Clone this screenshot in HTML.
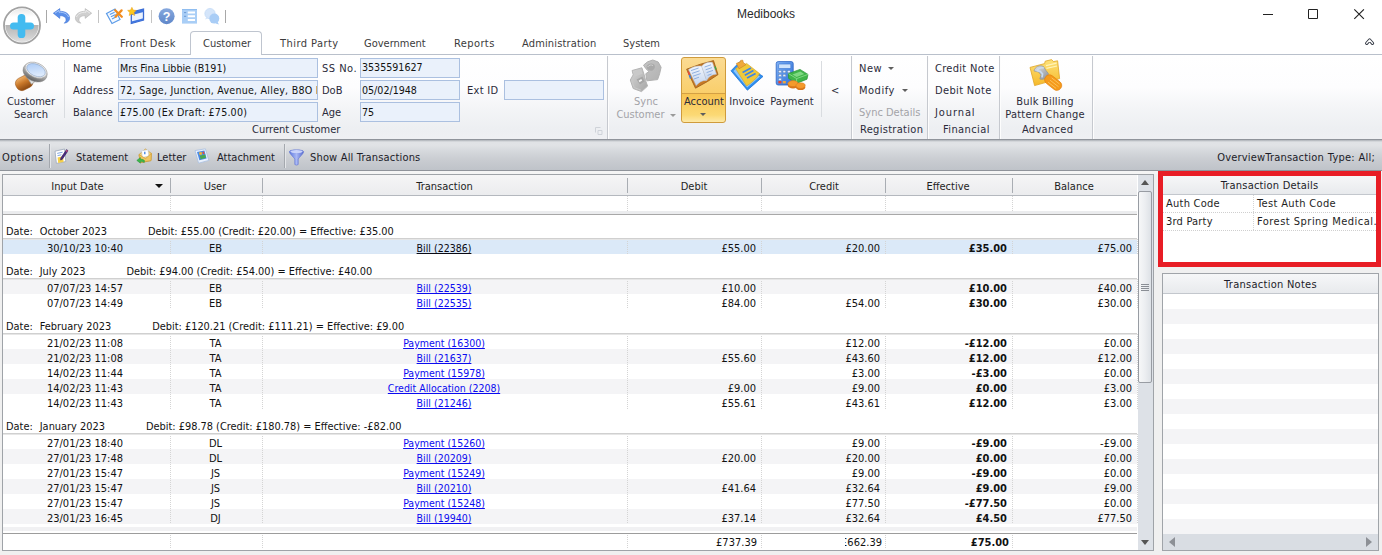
<!DOCTYPE html>
<html lang="en"><head><meta charset="utf-8"><title>Medibooks</title>
<style>
*{box-sizing:border-box}
html,body{margin:0;padding:0}
body{width:1382px;height:555px;overflow:hidden;background:#f0f0f0;font-family:"DejaVu Sans Condensed","Liberation Sans",sans-serif;font-size:11px;color:#1e1e1e;position:relative}
i{display:block;position:absolute;font-style:normal}
svg{position:absolute;display:block;overflow:visible}
.t{position:absolute;white-space:nowrap;line-height:13px}
.t.c{text-align:center}
.g{color:#9b9b9b}
/* title */
#titlebar{position:absolute;left:0;top:0;width:1382px;height:55px;background:#fff;border-bottom:1px solid #b9c0cb}
#titlebar .title{font-family:'Liberation Sans',sans-serif;font-size:12px;color:#2a2a2a}
.tab{color:#3b3b3b}
#tabsel{position:absolute;left:190px;top:31px;width:72px;height:24px;border:1px solid #bfc5cf;border-bottom:none;border-radius:4px 4px 0 0;background:#fff}
/* ribbon */
#ribbon{position:absolute;left:0;top:55px;width:1382px;height:85px;background:linear-gradient(#ffffff 0,#fdfdfe 38%,#f4f5f7 62%,#edeff2 88%,#eff0f3 100%);border-bottom:1px solid #90949b}
#ribbon .t{color:#2b2b3a}
#ribbon .t.g{color:#a3a3a8}
.gsep{left:0;top:1px;width:2px;height:83px;background:linear-gradient(90deg,#c6c9cf 0,#c6c9cf 50%,#fdfdfd 50%)}
.inp{position:absolute;height:20px;background:#eaf1fb;border:1px solid #abc0e0;font-size:10.6px;line-height:18px;padding-left:1px;white-space:nowrap;overflow:hidden;color:#111}
/* toolbar */
#toolbar{position:absolute;left:0;top:140px;width:1382px;height:31px;background:linear-gradient(#a9adb3 0,#cfd2d6 1.2px,#e0e2e5 2.5px,#e1e3e6 5px,#d4d7db 12px,#c9ccd1 20px,#bfc3c9 30px,#8f939a 30px,#8f939a 31px)}
#toolbar .t{color:#1c1c28}
/* grid */
#grid{position:absolute;left:2px;top:174px;width:1152px;height:377px;border:1px solid #9fa3a8;background:#fff;font-size:11px;overflow:hidden}
.ghead{position:absolute;left:0;top:0;width:1134px;height:21px;background:linear-gradient(#f5f5f6,#ebecee);border-bottom:1px solid #b4b8be}
.hsep{top:3px;width:1px;height:15px;background:#a9adb3}
.sortarrow{left:152px;top:9px;width:0;height:0;border:4px solid transparent;border-top:4px solid #111;border-bottom:none}
.gfilter{position:absolute;left:0;top:21px;width:1134px;height:15px;background:#fff}
.gfilterbar{position:absolute;left:0;top:36px;width:1134px;height:4px;background:#ebecee;border-bottom:1px solid #a8a8a8}
.vdot{width:1px;background:repeating-linear-gradient(#d4d4d4 0,#d4d4d4 1px,transparent 1px,transparent 2px)}
.grp{position:absolute;left:0;width:1134px;height:26px;z-index:2;border-bottom:1px solid #e6e6e6;box-shadow:inset 0 -1px 0 #d0d0d0;line-height:13px;padding-top:11px;white-space:nowrap;color:#111;font-size:10.9px}
.grp .g1{margin-left:3px}
.grp .g2{margin-left:7px}
.grp .g3{margin-left:41px}
.row{position:absolute;left:0;width:1134px;height:15px}
.row.sel{height:15px}
.row.alt{background:#f4f4f6}
.row.sel{background:#dbe9f8}
.cell{position:absolute;top:0;height:15px;line-height:19px;white-space:nowrap;color:#111}
.cell.c{text-align:center}
.cell.r{text-align:right;padding-right:4px}
.cell.b{font-weight:bold}
.row a{color:#0b0bf0;text-decoration:underline;font-size:10.5px}
.row.sel a{color:#0a0a14}
.gfootgap{position:absolute;left:0;top:352px;width:1134px;height:4px;background:#f1f1f3}
.gfoot{position:absolute;left:0;top:358px;width:1134px;height:17px;border-top:1px solid #9c9c9c;background:#fff}
.gfoot .cell{top:-1px}
/* right */
#redbox{position:absolute;left:1158px;top:171px;width:223px;height:96px;border:5px solid #e81d25;background:#fff}
.phead{position:absolute;left:0;top:0;right:0;height:19px;background:linear-gradient(#f6f7f8,#e8eaed);border-bottom:1px solid #c3c7cd;text-align:center;line-height:18px;color:#1c1c28}
.hdot{height:1px;background:repeating-linear-gradient(90deg,#cfcfcf 0,#cfcfcf 1px,transparent 1px,transparent 2px)}
#notes{position:absolute;left:1162px;top:273px;width:217px;height:278px;border:1px solid #a0a4a9;background:repeating-linear-gradient(#fff 0,#fff 15px,#f4f4f6 15px,#f4f4f6 30px);background-position:0 20px}
#acct{position:absolute;left:681px;top:2px;width:45px;height:66px;border:1px solid #cf9b3c;border-radius:3px;background:linear-gradient(#fbdb93 0,#f9ce6a 36px,#f8c452 36px,#fad066 48px,#fbd974 57px,#fde9a8 100%)}
#acct i{left:0;top:35px;width:43px;height:1px;background:#d3a044}
.dd{display:inline-block;width:0;height:0;border:3px solid transparent;border-top:3px solid #5e5e5e;border-bottom:none;vertical-align:middle;margin-left:2px}
.dd.g{border-top-color:#9a9a9a}
i.dd{display:block;position:absolute;margin:0}
/* vscroll */
#vs{position:absolute;left:1135px;top:0;width:15px;height:375px;background:#dde1e7}
#vs .thumb{position:absolute;left:0;top:16px;width:14px;height:192px;border:1px solid #989ca3;border-radius:2px;background:linear-gradient(90deg,#f6f7f8,#eceef1 50%,#dde1e6)}
#vs .up{left:2.5px;top:5px;width:0;height:0;border:4.5px solid transparent;border-bottom:5px solid #555;border-top:none}
#vs .down{left:2.5px;bottom:5px;width:0;height:0;border:4.5px solid transparent;border-top:5px solid #555;border-bottom:none}
#vs .grip{left:4px;top:108px;width:8px;height:7px;background:repeating-linear-gradient(#8a8e95 0,#8a8e95 1px,transparent 1px,transparent 2px)}
#hs{position:absolute;left:0;bottom:0;width:215px;height:16px;background:#d9dde3}
#hs .l{left:6px;top:3px;width:0;height:0;border:5px solid transparent;border-right:6px solid #8d9096;border-left:none}
#hs .r{right:6px;top:3px;width:0;height:0;border:5px solid transparent;border-left:6px solid #8d9096;border-right:none}

</style></head>
<body>
<div id="titlebar"><span class="t title" style="left:737px;top:7px;line-height:14px">Medibooks</span>
<i id="tabsel"></i>
<span class="t tab" style="left:62px;top:37px">Home</span>
<span class="t tab" style="left:120px;top:37px;letter-spacing:0.3px">Front Desk</span>
<span class="t tab" style="left:203px;top:37px">Customer</span>
<span class="t tab" style="left:280px;top:37px;letter-spacing:0.45px">Third Party</span>
<span class="t tab" style="left:364px;top:37px">Government</span>
<span class="t tab" style="left:454px;top:37px;letter-spacing:0.4px">Reports</span>
<span class="t tab" style="left:522px;top:37px;letter-spacing:0.15px">Administration</span>
<span class="t tab" style="left:623px;top:37px">System</span>
<svg style="left:1262px;top:9px" width="110" height="12" viewBox="0 0 110 12"><path d="M1 5.5h10M46.5 0.5h9v9h-9z" fill="none" stroke="#222" stroke-width="1"/><path d="M92.3 0.3l9.6 9.6M101.9 0.3l-9.6 9.6" fill="none" stroke="#222" stroke-width="1.15"/></svg>
<svg style="left:1365px;top:38px" width="10" height="8" viewBox="0 0 10 8"><path d="M1.7 5.3L4.6 2L7.5 5.3" fill="none" stroke="#3a3f4a" stroke-width="3.3" stroke-linecap="round" stroke-linejoin="round"/><path d="M1.7 5.3L4.6 2L7.5 5.3" fill="none" stroke="#fff" stroke-width="1.3" stroke-linecap="round" stroke-linejoin="round"/></svg>
<svg style="left:2px;top:5px" width="40" height="41" viewBox="0 0 40 41">
<defs>
<linearGradient id="orbT" x1="0" y1="0" x2="0" y2="1"><stop offset="0" stop-color="#dedede"/><stop offset="0.6" stop-color="#ffffff"/></linearGradient>
<linearGradient id="orbB" x1="0" y1="0" x2="0" y2="1"><stop offset="0" stop-color="#b4b4b4"/><stop offset="0.6" stop-color="#d2d2d2"/><stop offset="1" stop-color="#f0f0f0"/></linearGradient>
<clipPath id="orbc"><circle cx="20" cy="20.4" r="16.6"/></clipPath>
</defs>
<circle cx="20" cy="20.4" r="18" fill="#fff" stroke="#a2a2a2" stroke-width="1.8"/>
<g clip-path="url(#orbc)"><rect x="0" y="0" width="40" height="20" fill="url(#orbT)"/><rect x="0" y="20" width="40" height="21" fill="url(#orbB)"/></g>
<rect x="15.7" y="9" width="7.6" height="24" rx="3.6" fill="#43bbf0"/>
<rect x="8" y="17.4" width="24" height="7.2" rx="3.5" fill="#43bbf0"/>
</svg>
<i style="left:46px;top:10px;width:1px;height:13px;background:#a8a8a8"></i>
<svg style="left:53px;top:8px" width="17" height="16" viewBox="0 0 17 16"><path d="M0.3 5.2L6.8 0.6V3.3C12.5 3.2 16.6 6 16.6 10.2C16.6 12.8 14.6 14.8 11.2 15.2C13.4 13.6 13.6 11 12.2 9.4C11 8.1 9.2 7.7 6.8 7.7V10.4Z" fill="#5a8fe9" stroke="#3f74d6" stroke-width="0.6"/><path d="M2 5.2L6 2.3V4.2C10.5 4 14.5 5.8 15.5 9" fill="none" stroke="#a9c8fa" stroke-width="1"/></svg>
<svg style="left:75px;top:8px" width="17" height="16" viewBox="0 0 17 16"><path d="M16.7 5.2L10.2 0.6V3.3C4.5 3.2 0.4 6 0.4 10.2C0.4 12.8 2.4 14.8 5.8 15.2C3.6 13.6 3.4 11 4.8 9.4C6 8.1 7.8 7.7 10.2 7.7V10.4Z" fill="#cfcfcf" stroke="#b4b4b4" stroke-width="0.6"/><path d="M15 5.2L11 2.3V4.2C6.5 4 2.5 5.8 1.5 9" fill="none" stroke="#ececec" stroke-width="1"/></svg>
<i style="left:98px;top:10px;width:1px;height:13px;background:#c4c4c4"></i>
<svg style="left:106px;top:8px" width="17" height="16" viewBox="0 0 17 16"><path d="M0.5 5.5L9 1L14 11.5L6 15.5Z" fill="#f4f9ff" stroke="#5b9be8" stroke-width="1.2"/><path d="M3.8 6.6L8.6 4.2M4.9 8.8L9.7 6.4M6 11L10.8 8.6" stroke="#5b9be8" stroke-width="1.1"/><path d="M9.2 2.2L15.8 8.8M15.6 2.4L9.6 8.6" stroke="#f28c1e" stroke-width="2.3" stroke-linecap="round"/></svg>
<svg style="left:128px;top:7px" width="17" height="17" viewBox="0 0 17 17"><path d="M3.3 5.2L15.5 2.2V13L3.3 16.5Z" fill="#eaf2fe" stroke="#3a6bd2" stroke-width="1.3"/><path d="M3.3 5.2L15.5 2.2V5L3.3 8.2Z" fill="#3f75de"/><path d="M3.3 14.5L15.5 11.2V13L3.3 16.5Z" fill="#3f75de"/><path d="M3.9 0.3L5.2 3.1L8.2 3.4L6 5.5L6.6 8.5L3.9 7L1.2 8.5L1.8 5.5L-0.4 3.4L2.6 3.1Z" fill="#fcc81e" stroke="#e89a17" stroke-width="0.5"/></svg>
<i style="left:151px;top:10px;width:1px;height:13px;background:#c4c4c4"></i>
<svg style="left:158px;top:8px" width="17" height="17" viewBox="0 0 17 17"><defs><linearGradient id="hg" x1="0" y1="0" x2="0" y2="1"><stop offset="0" stop-color="#86a8de"/><stop offset="1" stop-color="#5f87c9"/></linearGradient></defs><circle cx="8.6" cy="8.2" r="8" fill="url(#hg)"/><text x="8.6" y="12.6" text-anchor="middle" font-family="Liberation Sans,sans-serif" font-weight="bold" font-size="12.5" fill="#fff">?</text></svg>
<svg style="left:182px;top:9px" width="15" height="15" viewBox="0 0 15 15"><rect x="0" y="0" width="15" height="14.6" fill="#a9cef6"/><rect x="0" y="0" width="15" height="1" fill="#8fbdf0"/><path d="M5.8 3.6h7.2M5.8 7.3h7.2M5.8 11h7.2" stroke="#fff" stroke-width="2"/><path d="M2 3.6h2.2M2 7.3h2.2" stroke="#5b8cc9" stroke-width="0.8"/></svg>
<svg style="left:204px;top:8px" width="16" height="17" viewBox="0 0 16 17"><circle cx="6" cy="5.6" r="5.2" fill="#d4e5fa" stroke="#b9d4f4" stroke-width="0.6"/><path d="M2.2 9L1.2 11.4L4.4 10.3Z" fill="#d4e5fa"/><circle cx="10.3" cy="10.6" r="5" fill="#a9cdf6"/><path d="M13.6 14L15 16.4L11.6 15.4Z" fill="#a9cdf6"/></svg>
<i style="left:225px;top:10px;width:1px;height:13px;background:#a8a8a8"></i>
</div>
<div id="ribbon"><span class="t c" style="left:0;width:62px;top:40px">Customer<br>Search</span>
<i style="left:64px;top:5px;width:1px;height:58px;background:#d9dce0"></i>
<span class="t" style="left:73px;top:7px">Name</span>
<span class="t" style="left:73px;top:29px;letter-spacing:0.2px">Address</span>
<span class="t" style="left:73px;top:51px">Balance</span>
<div class="inp" style="left:118px;top:3px;width:200px">Mrs Fina Libbie (B191)</div>
<div class="inp" style="left:118px;top:25px;width:200px;letter-spacing:0.24px">72, Sage, Junction, Avenue, Alley, B8O I</div>
<div class="inp" style="left:118px;top:47px;width:200px;letter-spacing:0.2px">£75.00 (Ex Draft: £75.00)</div>
<span class="t" style="left:322px;top:7px;letter-spacing:0.5px">SS No.</span>
<span class="t" style="left:322px;top:29px">DoB</span>
<span class="t" style="left:322px;top:51px">Age</span>
<div class="inp" style="left:360px;top:3px;width:100px;line-height:16px">3535591627</div>
<div class="inp" style="left:360px;top:25px;width:100px">05/02/1948</div>
<div class="inp" style="left:360px;top:47px;width:100px">75</div>
<span class="t" style="left:467px;top:29px;letter-spacing:0.3px">Ext ID</span>
<div class="inp" style="left:504px;top:25px;width:100px"></div>
<span class="t" style="left:252px;top:68px">Current Customer</span>
<i class="gsep" style="left:607px"></i>
<span class="t c g" style="left:611px;width:70px;top:40px">Sync<br>Customer <b class="dd g"></b></span>
<div id="acct"><i></i></div><i class="dd" style="left:700px;top:58px"></i>
<span class="t c" style="left:674px;width:60px;top:40px">Account</span>
<span class="t c" style="left:717px;width:60px;top:40px">Invoice</span>
<span class="t c" style="left:762px;width:60px;top:40px">Payment</span>
<i style="left:821px;top:6px;width:1px;height:56px;background:#d9dce0"></i>
<span class="t" style="left:831px;top:29px">&lt;</span>
<i class="gsep" style="left:851px"></i>
<span class="t" style="left:859px;top:7px;letter-spacing:0.5px">New</span><i class="dd" style="left:888px;top:12px"></i>
<span class="t" style="left:859px;top:29px;letter-spacing:0.5px">Modify</span><i class="dd" style="left:902px;top:34px"></i>
<span class="t g" style="left:859px;top:51px">Sync Details</span>
<span class="t" style="left:860px;top:68px;letter-spacing:0.3px">Registration</span>
<i class="gsep" style="left:927px"></i>
<span class="t" style="left:935px;top:7px;letter-spacing:0.3px">Credit Note</span>
<span class="t" style="left:935px;top:29px;letter-spacing:0.35px">Debit Note</span>
<span class="t" style="left:935px;top:51px;letter-spacing:0.9px">Journal</span>
<span class="t" style="left:943px;top:68px;letter-spacing:0.4px">Financial</span>
<i class="gsep" style="left:999px"></i>
<span class="t c" style="left:995px;width:100px;top:40px;letter-spacing:0.2px">Bulk Billing<br>Pattern Change</span>
<span class="t" style="left:1022px;top:68px;letter-spacing:0.3px">Advanced</span>
<i class="gsep" style="left:1092px"></i>
<svg style="left:15px;top:6px" width="34" height="31" viewBox="0 0 34 31">
<defs>
<linearGradient id="mgH" x1="0" y1="0" x2="0" y2="1"><stop offset="0" stop-color="#eeb068"/><stop offset="0.45" stop-color="#c9782a"/><stop offset="1" stop-color="#8a4812"/></linearGradient>
<linearGradient id="mgR" x1="0" y1="0" x2="0" y2="1"><stop offset="0" stop-color="#ececec"/><stop offset="0.5" stop-color="#b4b4b4"/><stop offset="1" stop-color="#5f5f5f"/></linearGradient>
<linearGradient id="mgL" x1="0" y1="0" x2="1" y2="1"><stop offset="0" stop-color="#a4c6f5"/><stop offset="1" stop-color="#eef5fe"/></linearGradient>
</defs>
<g transform="rotate(-27 9 22)"><rect x="0.5" y="15.4" width="17.5" height="13" rx="5.6" fill="url(#mgH)" stroke="#9a5518" stroke-width="0.5"/></g>
<path d="M11 14.2L13.4 12.2L20 20.6L16.4 23.2Z" fill="#e2e2e2" stroke="#9a9a9a" stroke-width="0.7"/>
<g transform="rotate(24 20.3 10.8)"><ellipse cx="20.3" cy="11.4" rx="12.6" ry="9" fill="url(#mgR)" stroke="#8c8c8c" stroke-width="0.5"/><ellipse cx="20.3" cy="9" rx="11.6" ry="7.2" fill="#e9e9e9" stroke="#a5a5a5" stroke-width="0.6"/><ellipse cx="20.3" cy="9" rx="9.8" ry="5.8" fill="url(#mgL)" stroke="#93a9c9" stroke-width="0.6"/></g>
</svg>
<svg style="left:629px;top:4px" width="34" height="34" viewBox="0 0 34 34">
<defs><linearGradient id="syg" x1="0" y1="0" x2="1" y2="1"><stop offset="0" stop-color="#d6d6d6"/><stop offset="1" stop-color="#a6a6a6"/></linearGradient>
<linearGradient id="syh" x1="0" y1="0" x2="1" y2="1"><stop offset="0" stop-color="#c4c4c4"/><stop offset="1" stop-color="#b2b2b2"/></linearGradient></defs>
<path d="M14.5 6.2L18.6 2.8L23.8 1L29.2 3L32.1 8.3L30.6 14.8L28.6 20.6L17.9 21.8L16.8 14.7L20 12.6L16.9 9.7Z" fill="url(#syh)" stroke="#b0b0b0" stroke-width="1" stroke-linejoin="round"/>
<path d="M17.4 7.4C19 4.6 22.6 3.4 25 5.4C26.6 7 26 9.6 23.6 11.4C21.6 12.4 19.4 11.4 18.2 9.8Z" fill="#a9a9a9"/>
<path d="M18.6 8C20 6 22.4 5.4 24 6.6" fill="none" stroke="#cfcfcf" stroke-width="1"/>
<path d="M3.1 11.5L12.9 8.8L15.5 17L16.6 21.6L18.6 27.1L12.5 32.6L4.2 29.5L1.3 21L4.2 15.8Z" fill="url(#syg)" stroke="#b4b4b4" stroke-width="1" stroke-linejoin="round"/>
<path d="M4.6 12.4L12 10.2L13.6 14.6L6.4 17.4Z" fill="#c9c9c9"/>
<path d="M7.6 20.4L13.4 17.6L15.6 22.6L11 25.6Z" fill="#a6a6a6"/><path d="M9.6 21.8L12.2 20L13.2 21.4L10.6 23.2Z" fill="#f6f6f6"/>
<path d="M2.6 21.2L5.2 28.6L12.2 31.2" fill="none" stroke="#c9c9c9" stroke-width="1"/>
</svg>
<svg style="left:686px;top:5px" width="33" height="29" viewBox="0 0 33 29">
<defs><linearGradient id="bkp" x1="0" y1="0" x2="0" y2="1"><stop offset="0" stop-color="#f2f6fc"/><stop offset="1" stop-color="#c3d4ee"/></linearGradient></defs>
<path d="M0.6 9.2L14.5 4.2L27.5 0.6L32 14.6L21.5 21.5L9.5 28.2Z" fill="#c77a26" stroke="#9c5a14" stroke-width="0.8"/>
<path d="M2.6 9.6C7 6.6 11.5 5.6 15.6 6.2L20.6 20.4C16.5 20.2 13 22 10.2 25.6Z" fill="url(#bkp)" stroke="#b9c7da" stroke-width="0.5"/>
<path d="M15.6 6.2C18.5 2.8 22.5 1.6 26.4 2.4L30.4 14.2C26.5 14 23 16.4 20.6 20.4Z" fill="url(#bkp)" stroke="#b9c7da" stroke-width="0.5"/>
<path d="M5 10.6L12.6 8M6 13.4L13.6 10.8M7 16.2L14.6 13.6M8 19L13 17.2M18.6 7L25 4.8M19.6 9.8L26 7.6M20.6 12.6L27 10.4M21.6 15.4L25.6 14" stroke="#86a9dc" stroke-width="0.9"/>
<path d="M2.2 11.5L3.4 15" stroke="#e24a3a" stroke-width="1.6"/><path d="M3.4 15L4.6 18.4" stroke="#3b7fe0" stroke-width="1.6"/>
<path d="M29 6.5L30 9.5" stroke="#38a94a" stroke-width="1.4"/>
</svg>
<svg style="left:730px;top:5px" width="34" height="31" viewBox="0 0 34 31">
<path d="M1 10.8L10 1.6L33 16.4L17.4 30.2Z" fill="#2f8ff0" stroke="#1d74d8" stroke-width="0.8"/>
<path d="M3.4 11L10.4 4L30 16.4L17.2 27.6Z" fill="#8cc6fb"/>
<path d="M5.6 8.6L16.6 3.4L29.6 13.6C27 17.8 22.6 22.4 16.6 26Z" fill="#f0c93a" stroke="#d2a222" stroke-width="0.6"/>
<path d="M12.6 12.4L21 8M14.8 15.2L23.4 10.6M17 18L25.6 13.4" stroke="#3d86e6" stroke-width="1.7"/>
<path d="M6.4 3.4L10.2 1.8L10.6 0.4L12.8 0.2L13.2 2.2L15.8 4.8L9 8.8Z" fill="#f0a93a" stroke="#c9801c" stroke-width="0.6"/>
</svg>
<svg style="left:775px;top:5px" width="34" height="31" viewBox="0 0 34 31">
<defs><linearGradient id="cag" x1="0" y1="0" x2="1" y2="1"><stop offset="0" stop-color="#7fb2f5"/><stop offset="1" stop-color="#2d6fd8"/></linearGradient></defs>
<rect x="1.2" y="1.6" width="17" height="23.4" rx="2" fill="url(#cag)" stroke="#2a62c4" stroke-width="0.8"/>
<rect x="3.6" y="4" width="12.2" height="4.6" rx="0.8" fill="#cfe3fb" stroke="#2f6bcf" stroke-width="0.6"/>
<g fill="#e8eef8" stroke="#5a7fb8" stroke-width="0.4"><rect x="3.6" y="10.6" width="2.8" height="2.2"/><rect x="8" y="10.6" width="2.8" height="2.2"/><rect x="12.4" y="10.6" width="2.8" height="2.2"/><rect x="3.6" y="14.4" width="2.8" height="2.2"/><rect x="8" y="14.4" width="2.8" height="2.2"/><rect x="3.6" y="18.2" width="2.8" height="2.2"/></g>
<rect x="3.4" y="21" width="3" height="2.4" fill="#e8412f"/><rect x="7.8" y="21" width="3" height="2.4" fill="#f2a63b"/>
<path d="M13.4 13.6L25 9.4L33 14.4L32 19.2L21.6 23.4L13.6 18.4Z" fill="#3fb549" stroke="#2b9337" stroke-width="0.7"/>
<path d="M13.4 13.6L21.6 18.6L33 14.4M21.6 18.6V23.2" fill="none" stroke="#8fe08f" stroke-width="0.8"/>
<path d="M17.5 14.4L25.4 11.6L29.2 14L21.6 17Z" fill="#7fd882"/>
<ellipse cx="18" cy="25.4" rx="5.2" ry="3" fill="#d8761a"/><ellipse cx="18" cy="23.6" rx="5.2" ry="3" fill="#f49a2c" stroke="#d8761a" stroke-width="0.5"/>
<ellipse cx="25.6" cy="27.2" rx="4.6" ry="2.8" fill="#d8761a"/><ellipse cx="25.6" cy="25.6" rx="4.6" ry="2.8" fill="#f49a2c" stroke="#d8761a" stroke-width="0.5"/>
</svg>
<svg style="left:1029px;top:4px" width="34" height="33" viewBox="0 0 34 33">
<defs><linearGradient id="fog" x1="0" y1="0" x2="0" y2="1"><stop offset="0" stop-color="#fde27a"/><stop offset="1" stop-color="#f6b92a"/></linearGradient>
<linearGradient id="wrg" x1="0" y1="0" x2="1" y2="1"><stop offset="0" stop-color="#e2e4e8"/><stop offset="1" stop-color="#8d9096"/></linearGradient></defs>
<path d="M1 8.4L15.6 4.6L16.2 2.2L22.6 0.6L24.4 2.6L28.6 1.8L30.6 19.6L5.6 26.6Z" fill="url(#fog)" stroke="#e0a526" stroke-width="0.8"/>
<path d="M17 6.6L27.6 4.2M17.4 9.4L28 7" stroke="#fff3b8" stroke-width="1.2"/>
<path d="M14.4 7.4C10.6 5.6 5.8 8 5 12L9.6 13L12 16L10.8 20C15 21.4 19 18.4 19.4 14.6L17 11.6Z" fill="url(#wrg)" stroke="#8a8d93" stroke-width="0.6"/>
<path d="M14.8 9C11.6 8.2 8.8 9.6 8.2 11.6L11.4 12.4L13.6 15L13 18.4" fill="none" stroke="#c9dcf2" stroke-width="1.6"/>
<g transform="rotate(38 25 24)"><rect x="14.6" y="19.4" width="19" height="9.6" rx="4.6" fill="#f59a1b" stroke="#e07d0c" stroke-width="0.6"/><path d="M20 21.4h10M20 24.2h11M20 27h10" stroke="#fbc15c" stroke-width="0.9"/></g>
</svg>
<svg style="left:595px;top:72px" width="8" height="8" viewBox="0 0 8 8"><path d="M0.5 0.5h5M0.5 0.5v5M3 3.5h4v4h-4z" fill="none" stroke="#cfd3d9" stroke-width="1"/></svg>
</div>
<div id="toolbar"><span class="t" style="left:2px;top:11px;letter-spacing:0.5px">Options</span>
<i style="left:49px;top:4px;width:2px;height:24px;background:linear-gradient(90deg,#a4a8ae 50%,#e4e6e9 50%)"></i>
<span class="t" style="left:76px;top:11px">Statement</span>
<span class="t" style="left:157px;top:11px">Letter</span>
<span class="t" style="left:217px;top:11px">Attachment</span>
<i style="left:284px;top:4px;width:2px;height:24px;background:linear-gradient(90deg,#a4a8ae 50%,#e4e6e9 50%)"></i>
<span class="t" style="left:310px;top:11px;letter-spacing:0.17px">Show All Transactions</span>
<span class="t" style="right:7px;top:11px;letter-spacing:0.2px;word-spacing:0.5px">OverviewTransaction Type: All;</span>
<svg style="left:54px;top:8px" width="16" height="16" viewBox="0 0 16 16"><path d="M1 3.2L10.6 1L11.8 13.6L2.4 15.4Z" fill="#fff" stroke="#9aa6b8" stroke-width="0.8"/><path d="M3.2 5.4L8.6 4.2M3.5 7.6L7.4 6.8" stroke="#7fa6e0" stroke-width="1"/><path d="M3.6 9.4L9 8.2L9.6 14L4.2 15Z" fill="#f6d04a"/><path d="M12.6 1.6L14 2.8L8.4 11.2L6.6 12L6.8 10Z" fill="#4a2a80" stroke="#2d1858" stroke-width="0.6"/><path d="M12.2 2.4L13.4 3.4" stroke="#e2507a" stroke-width="1.3"/></svg>
<svg style="left:136px;top:8px" width="16" height="16" viewBox="0 0 16 16"><path d="M3 6.6L9.4 1L15.4 5.4L15 12.6L4.4 14.6Z" fill="#f3d27a" stroke="#c99a35" stroke-width="0.7"/><path d="M5.6 2.8L12 1.8L12.8 8L6.4 9.4Z" fill="#fff" stroke="#b8c3d4" stroke-width="0.5"/><path d="M8.8 3.8V6.2" stroke="#3b7fe0" stroke-width="1.3"/><path d="M3 6.6L9.6 10.6L15.4 5.4L15 12.6L4.4 14.6Z" fill="#f0c560" stroke="#c99a35" stroke-width="0.6"/><path d="M0.8 12.4L4.4 9.6V11.2C6.4 11.2 7.8 11.6 8.6 12.8L8.2 14.6C7.2 13.8 6 13.6 4.4 13.6V15.2Z" fill="#3cb54a" stroke="#27913a" stroke-width="0.5"/></svg>
<svg style="left:194px;top:8px" width="16" height="16" viewBox="0 0 16 16"><path d="M1 2.6L11.4 0.8L14.8 12.4L4.6 15.2Z" fill="#e9f1fc" stroke="#a9bfe0" stroke-width="0.8"/><path d="M3 4L10.4 2.6L12.6 10.4L5.4 12.2Z" fill="#4a8be6"/><path d="M5 4.6L7.6 4.1L8.2 6.4L5.6 7Z" fill="#f7b52c"/><path d="M8.4 3.9L10 3.6L10.6 5.8L9 6.2Z" fill="#e8503a"/><path d="M5.8 7.8L11.2 6.6L12 9.8L6.6 11.2Z" fill="#4aa84f"/></svg>
<svg style="left:289px;top:9px" width="16" height="17" viewBox="0 0 16 17"><defs><linearGradient id="fng" x1="0" y1="0" x2="1" y2="0"><stop offset="0" stop-color="#5d78e0"/><stop offset="0.5" stop-color="#a9b8f4"/><stop offset="1" stop-color="#5468d0"/></linearGradient></defs><path d="M0.4 2.8C0.4 0.2 14.6 0.2 14.6 2.8C14.6 4.6 10 8.6 9.2 10V15.2C9.2 16.4 5.8 16.4 5.8 15.2V10C5 8.6 0.4 4.6 0.4 2.8Z" fill="url(#fng)" stroke="#5b6fcf" stroke-width="0.6"/><ellipse cx="7.5" cy="2.6" rx="6.2" ry="1.5" fill="#c9d3fa"/></svg>
</div>
<i style="left:0;top:171px;width:1382px;height:3px;background:#f4f4f4"></i>
<div id="grid">
<div class="ghead">
<div class="hc" style="left:0px;width:166px"></div>
<div class="hc" style="left:167px;width:91px"></div>
<div class="hc" style="left:259px;width:364px"></div>
<div class="hc" style="left:624px;width:133px"></div>
<div class="hc" style="left:758px;width:123px"></div>
<div class="hc" style="left:882px;width:126px"></div>
<div class="hc" style="left:1009px;width:125px"></div>
<span class="t c" style="left:14.5px;width:120px;top:5px">Input Date</span>
<span class="t c" style="left:152px;width:120px;top:5px">User</span>
<span class="t c" style="left:381.5px;width:120px;top:5px">Transaction</span>
<span class="t c" style="left:631px;width:120px;top:5px">Debit</span>
<span class="t c" style="left:761px;width:120px;top:5px">Credit</span>
<span class="t c" style="left:885px;width:120px;top:5px">Effective</span>
<span class="t c" style="left:1011px;width:120px;top:5px">Balance</span>
<i class="hsep" style="left:167px"></i>
<i class="hsep" style="left:259px"></i>
<i class="hsep" style="left:624px"></i>
<i class="hsep" style="left:758px"></i>
<i class="hsep" style="left:882px"></i>
<i class="hsep" style="left:1009px"></i>
<i class="sortarrow"></i>
</div>
<div class="gfilter">
<i class="vdot" style="left:167px;top:0;height:15px"></i>
<i class="vdot" style="left:259px;top:0;height:15px"></i>
<i class="vdot" style="left:624px;top:0;height:15px"></i>
<i class="vdot" style="left:758px;top:0;height:15px"></i>
<i class="vdot" style="left:882px;top:0;height:15px"></i>
<i class="vdot" style="left:1009px;top:0;height:15px"></i>
</div>
<div class="gfilterbar"></div>
<div class="grp" style="top:39px"><span class="g1">Date:</span><span class="g2">October 2023</span><span class="g3">Debit: £55.00 (Credit: £20.00) = Effective: £35.00</span></div>
<div class="row sel" style="top:64px">
<span class="cell c" style="left:0px;width:166px;padding-right:2px">30/10/23 10:40</span>
<span class="cell c" style="left:167px;width:91px">EB</span>
<span class="cell c" style="left:259px;width:364px"><a>Bill (22386)</a></span>
<span class="cell r" style="left:624px;width:133px">£55.00</span>
<span class="cell r" style="left:758px;width:123px">£20.00</span>
<span class="cell r b" style="left:882px;width:126px">£35.00</span>
<span class="cell r" style="left:1009px;width:125px;padding-right:5px">£75.00</span>
</div>
<i class="vdot" style="left:167px;top:64px;height:15px"></i>
<i class="vdot" style="left:259px;top:64px;height:15px"></i>
<i class="vdot" style="left:624px;top:64px;height:15px"></i>
<i class="vdot" style="left:758px;top:64px;height:15px"></i>
<i class="vdot" style="left:882px;top:64px;height:15px"></i>
<i class="vdot" style="left:1009px;top:64px;height:15px"></i>
<i class="vdot" style="left:1134px;top:64px;height:15px"></i>
<div class="grp" style="top:79px"><span class="g1">Date:</span><span class="g2">July 2023</span><span class="g3">Debit: £94.00 (Credit: £54.00) = Effective: £40.00</span></div>
<div class="row alt" style="top:104px">
<span class="cell c" style="left:0px;width:166px;padding-right:2px">07/07/23 14:57</span>
<span class="cell c" style="left:167px;width:91px">EB</span>
<span class="cell c" style="left:259px;width:364px"><a>Bill (22539)</a></span>
<span class="cell r" style="left:624px;width:133px">£10.00</span>
<span class="cell r" style="left:758px;width:123px"></span>
<span class="cell r b" style="left:882px;width:126px">£10.00</span>
<span class="cell r" style="left:1009px;width:125px;padding-right:5px">£40.00</span>
</div>
<div class="row" style="top:119px">
<span class="cell c" style="left:0px;width:166px;padding-right:2px">07/07/23 14:49</span>
<span class="cell c" style="left:167px;width:91px">EB</span>
<span class="cell c" style="left:259px;width:364px"><a>Bill (22535)</a></span>
<span class="cell r" style="left:624px;width:133px">£84.00</span>
<span class="cell r" style="left:758px;width:123px">£54.00</span>
<span class="cell r b" style="left:882px;width:126px">£30.00</span>
<span class="cell r" style="left:1009px;width:125px;padding-right:5px">£30.00</span>
</div>
<i class="vdot" style="left:167px;top:104px;height:30px"></i>
<i class="vdot" style="left:259px;top:104px;height:30px"></i>
<i class="vdot" style="left:624px;top:104px;height:30px"></i>
<i class="vdot" style="left:758px;top:104px;height:30px"></i>
<i class="vdot" style="left:882px;top:104px;height:30px"></i>
<i class="vdot" style="left:1009px;top:104px;height:30px"></i>
<i class="vdot" style="left:1134px;top:104px;height:30px"></i>
<div class="grp" style="top:134px"><span class="g1">Date:</span><span class="g2">February 2023</span><span class="g3">Debit: £120.21 (Credit: £111.21) = Effective: £9.00</span></div>
<div class="row" style="top:159px">
<span class="cell c" style="left:0px;width:166px;padding-right:2px">21/02/23 11:08</span>
<span class="cell c" style="left:167px;width:91px">TA</span>
<span class="cell c" style="left:259px;width:364px"><a>Payment (16300)</a></span>
<span class="cell r" style="left:624px;width:133px"></span>
<span class="cell r" style="left:758px;width:123px">£12.00</span>
<span class="cell r b" style="left:882px;width:126px">-£12.00</span>
<span class="cell r" style="left:1009px;width:125px;padding-right:5px">£0.00</span>
</div>
<div class="row alt" style="top:174px">
<span class="cell c" style="left:0px;width:166px;padding-right:2px">21/02/23 11:08</span>
<span class="cell c" style="left:167px;width:91px">TA</span>
<span class="cell c" style="left:259px;width:364px"><a>Bill (21637)</a></span>
<span class="cell r" style="left:624px;width:133px">£55.60</span>
<span class="cell r" style="left:758px;width:123px">£43.60</span>
<span class="cell r b" style="left:882px;width:126px">£12.00</span>
<span class="cell r" style="left:1009px;width:125px;padding-right:5px">£12.00</span>
</div>
<div class="row" style="top:189px">
<span class="cell c" style="left:0px;width:166px;padding-right:2px">14/02/23 11:44</span>
<span class="cell c" style="left:167px;width:91px">TA</span>
<span class="cell c" style="left:259px;width:364px"><a>Payment (15978)</a></span>
<span class="cell r" style="left:624px;width:133px"></span>
<span class="cell r" style="left:758px;width:123px">£3.00</span>
<span class="cell r b" style="left:882px;width:126px">-£3.00</span>
<span class="cell r" style="left:1009px;width:125px;padding-right:5px">£0.00</span>
</div>
<div class="row alt" style="top:204px">
<span class="cell c" style="left:0px;width:166px;padding-right:2px">14/02/23 11:43</span>
<span class="cell c" style="left:167px;width:91px">TA</span>
<span class="cell c" style="left:259px;width:364px"><a>Credit Allocation (2208)</a></span>
<span class="cell r" style="left:624px;width:133px">£9.00</span>
<span class="cell r" style="left:758px;width:123px">£9.00</span>
<span class="cell r b" style="left:882px;width:126px">£0.00</span>
<span class="cell r" style="left:1009px;width:125px;padding-right:5px">£3.00</span>
</div>
<div class="row" style="top:219px">
<span class="cell c" style="left:0px;width:166px;padding-right:2px">14/02/23 11:43</span>
<span class="cell c" style="left:167px;width:91px">TA</span>
<span class="cell c" style="left:259px;width:364px"><a>Bill (21246)</a></span>
<span class="cell r" style="left:624px;width:133px">£55.61</span>
<span class="cell r" style="left:758px;width:123px">£43.61</span>
<span class="cell r b" style="left:882px;width:126px">£12.00</span>
<span class="cell r" style="left:1009px;width:125px;padding-right:5px">£3.00</span>
</div>
<i class="vdot" style="left:167px;top:159px;height:75px"></i>
<i class="vdot" style="left:259px;top:159px;height:75px"></i>
<i class="vdot" style="left:624px;top:159px;height:75px"></i>
<i class="vdot" style="left:758px;top:159px;height:75px"></i>
<i class="vdot" style="left:882px;top:159px;height:75px"></i>
<i class="vdot" style="left:1009px;top:159px;height:75px"></i>
<i class="vdot" style="left:1134px;top:159px;height:75px"></i>
<div class="grp" style="top:234px"><span class="g1">Date:</span><span class="g2">January 2023</span><span class="g3">Debit: £98.78 (Credit: £180.78) = Effective: -£82.00</span></div>
<div class="row" style="top:259px">
<span class="cell c" style="left:0px;width:166px;padding-right:2px">27/01/23 18:40</span>
<span class="cell c" style="left:167px;width:91px">DL</span>
<span class="cell c" style="left:259px;width:364px"><a>Payment (15260)</a></span>
<span class="cell r" style="left:624px;width:133px"></span>
<span class="cell r" style="left:758px;width:123px">£9.00</span>
<span class="cell r b" style="left:882px;width:126px">-£9.00</span>
<span class="cell r" style="left:1009px;width:125px;padding-right:5px">-£9.00</span>
</div>
<div class="row alt" style="top:274px">
<span class="cell c" style="left:0px;width:166px;padding-right:2px">27/01/23 17:48</span>
<span class="cell c" style="left:167px;width:91px">DL</span>
<span class="cell c" style="left:259px;width:364px"><a>Bill (20209)</a></span>
<span class="cell r" style="left:624px;width:133px">£20.00</span>
<span class="cell r" style="left:758px;width:123px">£20.00</span>
<span class="cell r b" style="left:882px;width:126px">£0.00</span>
<span class="cell r" style="left:1009px;width:125px;padding-right:5px">£0.00</span>
</div>
<div class="row" style="top:289px">
<span class="cell c" style="left:0px;width:166px;padding-right:2px">27/01/23 15:47</span>
<span class="cell c" style="left:167px;width:91px">JS</span>
<span class="cell c" style="left:259px;width:364px"><a>Payment (15249)</a></span>
<span class="cell r" style="left:624px;width:133px"></span>
<span class="cell r" style="left:758px;width:123px">£9.00</span>
<span class="cell r b" style="left:882px;width:126px">-£9.00</span>
<span class="cell r" style="left:1009px;width:125px;padding-right:5px">£0.00</span>
</div>
<div class="row alt" style="top:304px">
<span class="cell c" style="left:0px;width:166px;padding-right:2px">27/01/23 15:47</span>
<span class="cell c" style="left:167px;width:91px">JS</span>
<span class="cell c" style="left:259px;width:364px"><a>Bill (20210)</a></span>
<span class="cell r" style="left:624px;width:133px">£41.64</span>
<span class="cell r" style="left:758px;width:123px">£32.64</span>
<span class="cell r b" style="left:882px;width:126px">£9.00</span>
<span class="cell r" style="left:1009px;width:125px;padding-right:5px">£9.00</span>
</div>
<div class="row" style="top:319px">
<span class="cell c" style="left:0px;width:166px;padding-right:2px">27/01/23 15:47</span>
<span class="cell c" style="left:167px;width:91px">JS</span>
<span class="cell c" style="left:259px;width:364px"><a>Payment (15248)</a></span>
<span class="cell r" style="left:624px;width:133px"></span>
<span class="cell r" style="left:758px;width:123px">£77.50</span>
<span class="cell r b" style="left:882px;width:126px">-£77.50</span>
<span class="cell r" style="left:1009px;width:125px;padding-right:5px">£0.00</span>
</div>
<div class="row alt" style="top:334px">
<span class="cell c" style="left:0px;width:166px;padding-right:2px">23/01/23 16:45</span>
<span class="cell c" style="left:167px;width:91px">DJ</span>
<span class="cell c" style="left:259px;width:364px"><a>Bill (19940)</a></span>
<span class="cell r" style="left:624px;width:133px">£37.14</span>
<span class="cell r" style="left:758px;width:123px">£32.64</span>
<span class="cell r b" style="left:882px;width:126px">£4.50</span>
<span class="cell r" style="left:1009px;width:125px;padding-right:5px">£77.50</span>
</div>
<i class="vdot" style="left:167px;top:259px;height:90px"></i>
<i class="vdot" style="left:259px;top:259px;height:90px"></i>
<i class="vdot" style="left:624px;top:259px;height:90px"></i>
<i class="vdot" style="left:758px;top:259px;height:90px"></i>
<i class="vdot" style="left:882px;top:259px;height:90px"></i>
<i class="vdot" style="left:1009px;top:259px;height:90px"></i>
<i class="vdot" style="left:1134px;top:259px;height:90px"></i>
<div class="gfootgap"></div>
<div class="gfoot">
<i class="vdot" style="left:167px;top:1px;height:14px"></i>
<i class="vdot" style="left:259px;top:1px;height:14px"></i>
<i class="vdot" style="left:624px;top:1px;height:14px"></i>
<i class="vdot" style="left:758px;top:1px;height:14px"></i>
<i class="vdot" style="left:882px;top:1px;height:14px"></i>
<i class="vdot" style="left:1009px;top:1px;height:14px"></i>
<span class="cell r" style="left:624px;width:133px;padding-right:3px">£737.39</span>
<span class="cell r" style="left:842px;width:39px;padding-right:2px;overflow:hidden;direction:rtl"><bdo dir="ltr">£662.39</bdo></span>
<span class="cell r b" style="left:882px;width:126px;padding-right:2px">£75.00</span>
</div>
<div id="vs"><i class="up"></i><div class="thumb"><i class="grip" style="left:2px;top:92px;width:8px;height:8px"></i></div><i class="down"></i></div>

</div>
<div id="redbox">
<div class="phead" style="height:19px;line-height:20px;letter-spacing:0.2px">Transaction Details</div>
<span class="t" style="left:3px;top:21px;letter-spacing:0.25px">Auth Code</span>
<span class="t" style="left:94px;top:21px;letter-spacing:0.35px">Test Auth Code</span>
<span class="t" style="left:3px;top:39px;letter-spacing:0.2px">3rd Party</span>
<span class="t" style="left:94px;top:39px;letter-spacing:0.48px">Forest Spring Medical.</span>
<i class="hdot" style="left:0;top:36px;width:213px"></i>
<i class="hdot" style="left:0;top:54px;width:213px"></i>
<i class="vdot" style="left:90px;top:19px;height:36px"></i>
</div>
<div id="notes">
<div class="phead" style="height:20px;line-height:21px;letter-spacing:0.27px">Transaction Notes</div>
<div id="hs"><i class="l"></i><i class="r"></i></div>
</div>

</body></html>
